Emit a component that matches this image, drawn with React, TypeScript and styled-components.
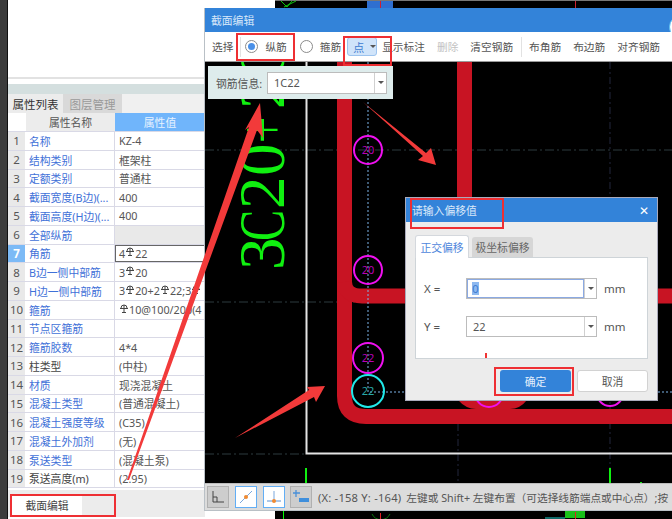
import React from "react";
import styled, { createGlobalStyle } from "styled-components";

const Global = createGlobalStyle`
  html, body { margin: 0; padding: 0; background: #000; }
  * { box-sizing: border-box; }
`;
const FONT = `"Noto Sans", "Noto Sans CJK SC", sans-serif`;

const Page = styled.div`
  position: relative; width: 672px; height: 519px; overflow: hidden;
  display: flex; background: #000; font-family: ${FONT}; font-size: 12px; color: #444;
`;
const EdgeStrip = styled.div`width: 8px; background: #3c3c3c; border-right: 1px solid #111;`;
const LeftPane = styled.div`
  width: 267px; height: 519px; padding-top: 2px; display: flex; flex-direction: column; background: #fff;
`;
const BlankArea = styled.div`height: 77px; background: #fff; border-bottom: 2px solid #e2e2e2;`;
const Band = styled.div`height: 15px; border-top: 5px solid #fff; background: #d4dfdf;`;
const TabStrip = styled.div`display: flex; height: 19px; background: #f0f0f0; width: 197px;`;
const PaneTab = styled.div<{ $active?: boolean }>`
  width: ${p => (p.$active ? 55 : 59)}px; display: flex; align-items: center; justify-content: center;
  font-size: 11.5px; background: ${p => (p.$active ? "#ececec" : "#d9d9d9")};
  color: ${p => (p.$active ? "#333" : "#999")};
`;
const Table = styled.div`width: 197px; display: flex; flex-direction: column; background: #fff;`;
const Row = styled.div<{ $h?: number }>`
  display: grid; grid-template-columns: 18px 89px 90px; height: ${p => p.$h ?? 18.75}px;
  border-bottom: 1px solid #d9d9e6;
`;
const Num = styled.div<{ $active?: boolean; $blank?: boolean }>`
  display: flex; align-items: center; justify-content: center; font-size: 11.5px;
  background: ${p => (p.$blank ? "#fff" : p.$active ? "#7cbaf6" : "#e9e9e9")};
  color: ${p => (p.$active ? "#fff" : "#555")}; font-weight: ${p => (p.$active ? 700 : 400)};
  border-right: 1px solid #fff;
`;
const Name = styled.div<{ $plain?: boolean }>`
  display: flex; align-items: center; padding-left: 3px; font-size: 10.8px; white-space: nowrap; overflow: hidden;
  color: ${p => (p.$plain ? "#444" : "#3f71d8")}; border-right: 1px solid #d9d9e6;
`;
const Value = styled.div<{ $filled?: boolean; $focus?: boolean }>`
  display: flex; align-items: center; padding-left: ${p => (p.$focus ? 3 : 4)}px; font-size: 10.8px; color: #555;
  white-space: nowrap; overflow: hidden;
  background: ${p => (p.$filled ? "#e9e9e9" : "#fff")};
  border: ${p => (p.$focus ? "1px solid #666" : "none")};
`;
const HeadCell = styled.div<{ $blue?: boolean }>`
  display: flex; align-items: center; justify-content: center; font-size: 10.8px;
  background: ${p => (p.$blue ? "#70b5fb" : "#ececec")}; color: ${p => (p.$blue ? "#e8f3ff" : "#555")};
`;
const Gap = styled.div`height: 2px; background: #fff; width: 197px;`;
const BottomTabs = styled.div`
  display: flex; width: 197px; height: 27px; background: #ececec; padding: 5px 0 0 4px;
`;
const BottomTab = styled.div`
  width: 70px; height: 20px; background: #fff; display: flex; align-items: center; justify-content: center;
  font-size: 10.8px; color: #444;
`;

const BackBits = styled.svg`position: absolute; left: 275px; top: 0; width: 397px; height: 519px;`;

const Window = styled.section`
  position: absolute; left: 204px; top: 8px; width: 468px; height: 503px;
  display: flex; flex-direction: column; border-left: 1px solid #b9c0c6; border-bottom: 1px solid #b9c0c6; background: #000;
`;
const TitleBar = styled.header`
  height: 24px; flex: none; background: #3383d9; color: #d8e8fa; font-size: 10.8px;
  display: flex; align-items: center; padding-left: 6px; position: relative; overflow: hidden;
`;
const CloseDisc = styled.div`
  position: absolute; right: -21px; top: 7px; width: 24px; height: 24px; border-radius: 50%;
  background: #fff; border: 1px solid #5cc0f2;
`;
const Toolbar = styled.div`
  height: 30px; flex: none; background: #fff; border-bottom: 1px solid #9a9a9a; padding-left: 7px;
  display: flex; align-items: center; font-size: 10.7px; color: #555; white-space: nowrap;
`;
const ToolText = styled.span<{ $dim?: boolean; $l?: number }>`
  margin-left: ${p => p.$l ?? 0}px; color: ${p => (p.$dim ? "#c2c2c2" : "#555")};
`;
const ToolSep = styled.span<{ $l: number }>`width: 1px; height: 20px; background: #e2e2e2; margin-left: ${p => p.$l}px;`;
const Radio = styled.span<{ $on?: boolean; $l: number }>`
  width: 13px; height: 13px; border-radius: 50%; border: 1px solid #8b8b8b; background: #fff; margin-left: ${p => p.$l}px; flex: none;
  display: flex; align-items: center; justify-content: center;
  &::after { content: ""; width: 7px; height: 7px; border-radius: 50%; background: ${p => (p.$on ? "#4a90e8" : "transparent")}; }
`;
const PointBtn = styled.div`
  width: 30px; height: 19px; margin-left: 6px; border: 1px solid #9cc3ee; border-radius: 3px; background: #d0e4fa;
  color: #3c7bd0; display: flex; align-items: center; gap: 6px; padding-left: 5px; font-size: 11px;
`;
const Caret = styled.span`
  width: 0; height: 0; border-left: 3px solid transparent; border-right: 3px solid transparent; border-top: 3px solid #555;
`;
const CanvasArea = styled.div`flex: 1; position: relative; background: #000; overflow: hidden;`;
const CanvasSvg = styled.svg`position: absolute; inset: 0; width: 100%; height: 100%; display: block;`;
const StatusBar = styled.footer`
  height: 27px; flex: none; background: #dcdcdc; border-top: 1px solid #bcbcbc; display: flex; align-items: center;
  padding-left: 2px; font-size: 10.7px; color: #555; white-space: nowrap; overflow: hidden;
`;
const StatusBtn = styled.div<{ $on?: boolean; $l: number }>`
  width: 22px; height: 22px; flex: none; margin-left: ${p => p.$l}px; display: flex; align-items: center; justify-content: center;
  background: ${p => (p.$on ? "#fff" : "#cdcdcd")}; border: 1px solid ${p => (p.$on ? "#62aef5" : "#b0b0b0")};
`;
const Coord = styled.span`margin-left: 6px; font-size: 11.2px; letter-spacing: .2px;`;
const Hint = styled.span`margin-left: 5px;`;

const InfoPanel = styled.div`
  position: absolute; left: 3px; top: 4px; width: 185px; height: 33px; background: #deecec;
  display: flex; align-items: center; padding-left: 8px; font-size: 10.8px; color: #555;
`;
const InfoLabel = styled.span`width: 51px;`;
const Combo = styled.div<{ $w: number; $h: number }>`
  width: ${p => p.$w}px; height: ${p => p.$h}px; flex: none; display: flex; background: #fff;
  border: 1px solid #bcbcbc;
`;
const ComboInput = styled.div<{ $focus?: boolean }>`
  flex: 1; display: flex; align-items: center; padding-left: ${p => (p.$focus ? 5 : 6)}px; font-size: 11px; color: #555;
  ${p => (p.$focus ? "outline: 1px solid #8ba9e2; outline-offset: -1px;" : "")}
`;
const ComboArrow = styled.div`
  width: 12px; border-left: 1px solid #d0d0d0; display: flex; align-items: center; justify-content: center;
`;
const Selected = styled.span`background: #8db9f0; color: #3c7bd0; width: 7px; height: 13px; line-height: 13px; text-align: center;`;

const Dialog = styled.div`
  position: absolute; left: 201px; top: 136px; width: 251px; height: 202px; background: #ececec;
  display: flex; flex-direction: column; box-shadow: 0 0 0 1px #aab;
`;
const DialogTitle = styled.div`
  height: 24px; flex: none; background: #3383d9; color: #dbe9fa; font-size: 10.8px; padding: 0 8px 0 6px;
  display: flex; align-items: center; justify-content: space-between;
`;
const CloseX = styled.span`font-size: 12px; color: #fff;`;
const DialogBody = styled.div`flex: 1; padding: 13px 9px 0; display: flex; flex-direction: column;`;
const DlgTabs = styled.div`display: flex; align-items: flex-end; height: 22px; gap: 3px;`;
const DlgTab = styled.div<{ $active?: boolean }>`
  width: ${p => (p.$active ? 54 : 61)}px; height: ${p => (p.$active ? 23 : 20)}px; font-size: 10.8px;
  display: flex; align-items: center; justify-content: center; border-radius: 3px 3px 0 0;
  background: ${p => (p.$active ? "#fff" : "#d6d6d6")}; color: ${p => (p.$active ? "#4f87dc" : "#666")};
  border: ${p => (p.$active ? "1px solid #d4d8dd" : "none")}; border-bottom: none;
  position: relative; z-index: 1; margin-bottom: ${p => (p.$active ? -1 : 0)}px;
`;
const DlgPanel = styled.div`
  height: 102px; background: #fff; border: 1px solid #ced4d8; padding: 20px 0 0 8px;
  display: flex; flex-direction: column; gap: 17px; position: relative;
`;
const FieldRow = styled.div`display: flex; align-items: center; height: 21px; font-size: 11.5px; color: #555;`;
const FieldLabel = styled.span`width: 42px;`;
const Unit = styled.span`margin-left: 7px;`;
const RedTick = styled.span`position: absolute; left: 69px; bottom: 0; width: 2px; height: 5px; background: #f03434;`;
const BtnRow = styled.div`display: flex; justify-content: flex-end; gap: 6px; margin-top: 11px;`;
const DlgBtn = styled.div<{ $primary?: boolean }>`
  width: 71px; height: 22px; border-radius: 3px; display: flex; align-items: center; justify-content: center; font-size: 10.8px;
  background: ${p => (p.$primary ? "#3383d9" : "#fff")}; color: ${p => (p.$primary ? "#e3effc" : "#555")};
  border: ${p => (p.$primary ? "none" : "1px solid #d2d2d2")};
`;

const Overlay = styled.svg`position: absolute; left: 0; top: 0; width: 672px; height: 519px; pointer-events: none;`;
const RebarMark = styled.svg`margin: 0 1px 3px;`;

const Rebar = () => (
  <RebarMark width="8" height="9" viewBox="0 0 8 9">
    <path d="M1 4 A3 3 0 0 1 7 4 M0 4.5 H8 M4 1 V8.5 M2 8.5 H6" fill="none" stroke="#444" strokeWidth="1" />
  </RebarMark>
);

type R = { n: number; name: string; val?: React.ReactNode; plain?: boolean; filled?: boolean; focus?: boolean };
const rows: R[] = [
  { n: 1, name: "名称", val: "KZ-4" },
  { n: 2, name: "结构类别", val: "框架柱" },
  { n: 3, name: "定额类别", val: "普通柱" },
  { n: 4, name: "截面宽度(B边)(...", val: "400" },
  { n: 5, name: "截面高度(H边)(...", val: "400" },
  { n: 6, name: "全部纵筋", filled: true },
  { n: 7, name: "角筋", val: <>4<Rebar />22</>, focus: true },
  { n: 8, name: "B边一侧中部筋", val: <>3<Rebar />20</> },
  { n: 9, name: "H边一侧中部筋", val: <>3<Rebar />20+2<Rebar />22;3<Rebar /></> },
  { n: 10, name: "箍筋", val: <><Rebar />10@100/200(4</> },
  { n: 11, name: "节点区箍筋" },
  { n: 12, name: "箍筋胶数", val: "4*4" },
  { n: 13, name: "柱类型", val: "(中柱)", plain: true },
  { n: 14, name: "材质", val: "现浇混凝土" },
  { n: 15, name: "混凝土类型", val: "(普通混凝土)" },
  { n: 16, name: "混凝土强度等级", val: "(C35)" },
  { n: 17, name: "混凝土外加剂", val: "(无)" },
  { n: 18, name: "泵送类型", val: "(混凝土泵)" },
  { n: 19, name: "泵送高度(m)", val: "(2.95)", plain: true },
];

const RED = "#c81423";
const chars: [string, number, number][] = [
  ["3", 270, 1], ["C", 241, 0.72], ["2", 209, 1], ["0", 176, 1], ["+", 143, 0.72], ["2", 109, 1], ["C", 78, 0.72],
];

const Arrow = ({ d }: { d: string }) => <path d={d} fill="#f23a3a" />;
const RedBox = ({ x, y, w, h }: { x: number; y: number; w: number; h: number }) => (
  <rect x={x} y={y} width={w} height={h} fill="none" stroke="#ee2f33" strokeWidth="2" />
);

function ComboField({ children, focus }: { children: React.ReactNode; focus?: boolean }) {
  return (
    <Combo $w={131} $h={21}>
      <ComboInput $focus={focus}>{children}</ComboInput>
      <ComboArrow><Caret /></ComboArrow>
    </Combo>
  );
}

export default function App() {
  return (
    <>
      <Global />
      <Page>
        <EdgeStrip />
        <LeftPane>
          <BlankArea />
          <Band />
          <TabStrip>
            <PaneTab $active>属性列表</PaneTab>
            <PaneTab>图层管理</PaneTab>
          </TabStrip>
          <Table>
            <Row $h={19}>
              <Num $blank />
              <HeadCell>属性名称</HeadCell>
              <HeadCell $blue>属性值</HeadCell>
            </Row>
            {rows.map(r => (
              <Row key={r.n}>
                <Num $active={r.focus}>{r.n}</Num>
                <Name $plain={r.plain}>{r.name}</Name>
                <Value $filled={r.filled} $focus={r.focus}>{r.val}</Value>
              </Row>
            ))}
          </Table>
          <Gap />
          <BottomTabs><BottomTab>截面编辑</BottomTab></BottomTabs>
        </LeftPane>

        <BackBits viewBox="275 0 397 519">
          <rect x="367" y="1" width="26" height="7" fill="#2f6fd0" />
          <rect x="380" y="1" width="1" height="7" fill="#d02030" />
          <rect x="575" y="1" width="1" height="7" fill="#d02030" />
          <rect x="275" y="0" width="397" height="1" fill="#777" />
          <path d="M281 1 L287 7 L292 1 M284 7 L296 1" stroke="#10c010" fill="none" />
          <rect x="283" y="510" width="1" height="9" fill="#0f0" />
          <path d="M372 514 A10 10 0 0 0 390 514" stroke="#0b7a0b" fill="none" />
          <rect x="380" y="513" width="1" height="6" fill="#e02020" />
          <rect x="565" y="510" width="20" height="8" fill="#18c018" />
          <rect x="575" y="512" width="1" height="7" fill="#e02020" />
          <rect x="545" y="517" width="20" height="2" fill="#0f6a6a" />
        </BackBits>

        <Window>
          <TitleBar>截面编辑<CloseDisc /></TitleBar>
          <Toolbar>
            <ToolText>选择</ToolText>
            <ToolSep $l={7} />
            <Radio $on $l={4} />
            <ToolText $l={7}>纵筋</ToolText>
            <Radio $l={13} />
            <ToolText $l={7}>箍筋</ToolText>
            <PointBtn>点<Caret /></PointBtn>
            <ToolText $l={5}>显示标注</ToolText>
            <ToolText $dim $l={12}>删除</ToolText>
            <ToolText $l={12}>清空钢筋</ToolText>
            <ToolSep $l={8} />
            <ToolText $l={7}>布角筋</ToolText>
            <ToolText $l={12}>布边筋</ToolText>
            <ToolText $l={12}>对齐钢筋</ToolText>
          </Toolbar>
          <CanvasArea>
            <CanvasSvg viewBox="205 62 467 421" preserveAspectRatio="none">
              <g stroke="#2c3a3e" strokeDasharray="9 3 2 3" strokeWidth="1">
                <path d="M205 150 H672 M205 302 H672 M205 454 H306" />
              </g>
              <path d="M610 62 V483 M458 424 V483" stroke="#22263c" strokeDasharray="7 3 2 3" />
              <path d="M306.5 62 V453.5 H672" fill="none" stroke="#e4e4e4" strokeWidth="2" />
              <path d="M306 468 V483 M610 468 V483 M641 482 V483" stroke="#10f010" strokeWidth="2" />
              {chars.map(([c, y, sx], i) => (
                <text
                  key={i}
                  transform={`translate(284 ${y}) rotate(-90) scale(${sx} 1)`}
                  fontFamily="'Liberation Serif', serif"
                  fontSize="65"
                  fill="#10f010"
                >{c}</text>
              ))}
              <g fill="none" stroke={RED} strokeWidth="15">
                <path d="M344.5 62 V396 Q344.5 416.5 366 416.5 H672" />
                <path d="M464.5 62 V210" />
                <path d="M344.5 282 Q345 296 362 296 H672" />
              </g>
              <path d="M458 400 Q466 409 476 409 H510 Q520 409 527 400 Z" fill={RED} />
              <path d="M368 62 V392 H672" fill="none" stroke="#7db4e8" strokeDasharray="2 2" />
              <g fill="none" stroke="#f010f0" strokeWidth="2">
                <circle cx="368" cy="150" r="14" />
                <circle cx="368" cy="270" r="14" />
                <circle cx="368" cy="358" r="15" />
                <circle cx="489" cy="393" r="14" />
                <circle cx="610" cy="393" r="13" />
              </g>
              <circle cx="368" cy="391" r="16" fill="none" stroke="#20e8e8" strokeWidth="2" />
              <g fontFamily="'Noto Sans', sans-serif" fontSize="11" textAnchor="middle" fill="#b800b8">
                <text x="368" y="154">20</text>
                <text x="368" y="274">20</text>
                <text x="368" y="362">22</text>
                <text x="368" y="395" fill="#28a8a8">22</text>
              </g>
            </CanvasSvg>
            <InfoPanel>
              <InfoLabel>钢筋信息:</InfoLabel>
              <Combo $w={120} $h={22}>
                <ComboInput>1C22</ComboInput>
                <ComboArrow><Caret /></ComboArrow>
              </Combo>
            </InfoPanel>
            <Dialog>
              <DialogTitle>请输入偏移值<CloseX>✕</CloseX></DialogTitle>
              <DialogBody>
                <DlgTabs>
                  <DlgTab $active>正交偏移</DlgTab>
                  <DlgTab>极坐标偏移</DlgTab>
                </DlgTabs>
                <DlgPanel>
                  <FieldRow>
                    <FieldLabel>X =</FieldLabel>
                    <ComboField focus><Selected>0</Selected></ComboField>
                    <Unit>mm</Unit>
                  </FieldRow>
                  <FieldRow>
                    <FieldLabel>Y =</FieldLabel>
                    <ComboField>22</ComboField>
                    <Unit>mm</Unit>
                  </FieldRow>
                  <RedTick />
                </DlgPanel>
                <BtnRow>
                  <DlgBtn $primary>确定</DlgBtn>
                  <DlgBtn>取消</DlgBtn>
                </BtnRow>
              </DialogBody>
            </Dialog>
          </CanvasArea>
          <StatusBar>
            <StatusBtn $l={0}>
              <svg width="16" height="16" viewBox="0 0 16 16"><path d="M3 2 V13 H14 M3 8 H7 V13" fill="none" stroke="#444" /></svg>
            </StatusBtn>
            <StatusBtn $on $l={6}>
              <svg width="16" height="16" viewBox="0 0 16 16"><path d="M2 14 L14 2" stroke="#7aa7dc" /><circle cx="8" cy="8" r="2" fill="#f08a30" /></svg>
            </StatusBtn>
            <StatusBtn $on $l={6}>
              <svg width="16" height="16" viewBox="0 0 16 16"><path d="M1 12 H15" stroke="#5a8fd0" /><path d="M8 2 V12" stroke="#7aa7dc" /><circle cx="8" cy="12" r="2" fill="#f08a30" /></svg>
            </StatusBtn>
            <StatusBtn $l={5}>
              <svg width="18" height="16" viewBox="0 0 18 16"><path d="M4 1 V8 M1 4 H8" stroke="#4a90d8" strokeWidth="1.3" /><rect x="7" y="9" width="10" height="4" fill="#3f8fdc" /></svg>
            </StatusBtn>
            <Coord>(X: -158 Y: -164)</Coord>
            <Hint>左键或 Shift+ 左键布置（可选择线筋端点或中心点）;按</Hint>
          </StatusBar>
        </Window>

        <Overlay viewBox="0 0 672 519">
          <RedBox x={237} y={34} w={57} h={26} />
          <RedBox x={344} y={37} w={47} h={28} />
          <RedBox x={411} y={199} w={92} h={29} />
          <RedBox x={495} y={368} w={78} h={27} />
          <RedBox x={11} y={495} w={104} h={21} />
          <Arrow d="M260 103 L263 138 L257 130 L129 480 L127 480 L249 127 L245 130 Z" />
          <Arrow d="M363 102 L426 153 L431 148 L436 165 L418 160 L423 156 Z" />
          <Arrow d="M325 386 L316 402 L314 397 L235 438 L309 390 L307 387 Z" />
        </Overlay>
      </Page>
    </>
  );
}
